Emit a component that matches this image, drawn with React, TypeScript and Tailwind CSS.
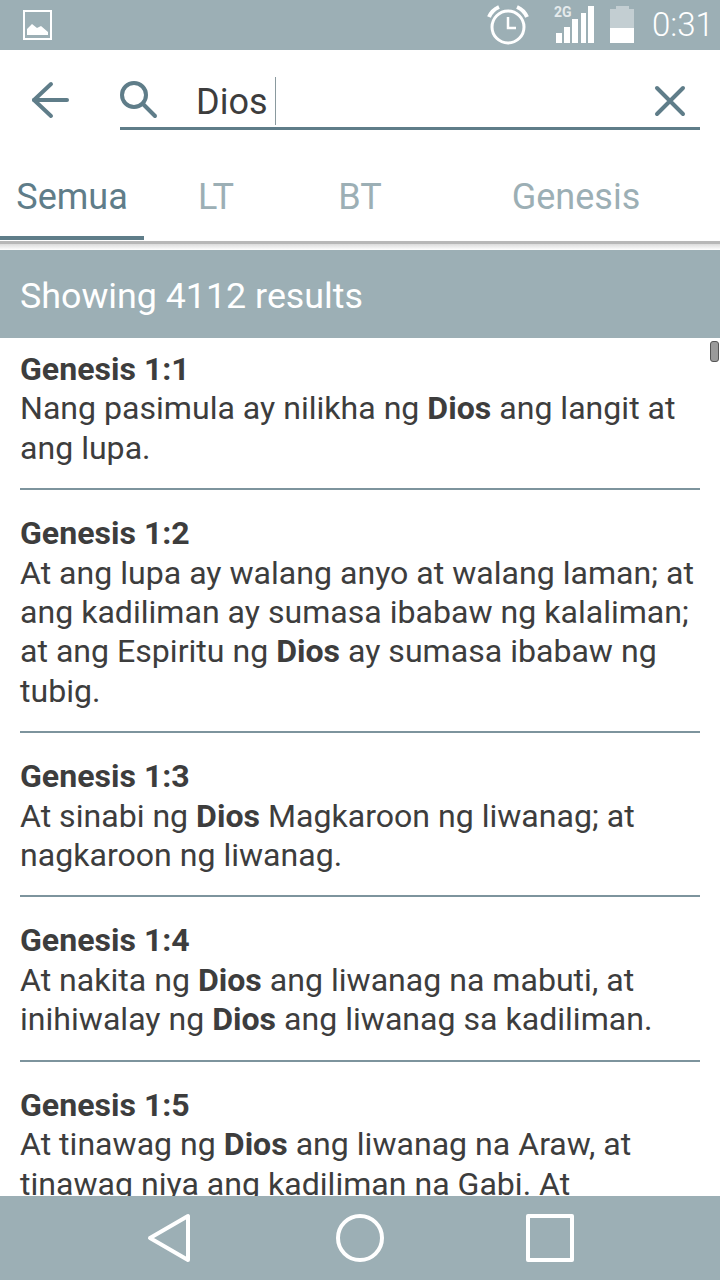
type Verse = { ref: string; lines: (string | { b: string })[][] }

const verses: Verse[] = [
  {
    ref: 'Genesis 1:1',
    lines: [
      ['Nang pasimula ay nilikha ng ', { b: 'Dios' }, ' ang langit at'],
      ['ang lupa.'],
    ],
  },
  {
    ref: 'Genesis 1:2',
    lines: [
      ['At ang lupa ay walang anyo at walang laman; at'],
      ['ang kadiliman ay sumasa ibabaw ng kalaliman;'],
      ['at ang Espiritu ng ', { b: 'Dios' }, ' ay sumasa ibabaw ng'],
      ['tubig.'],
    ],
  },
  {
    ref: 'Genesis 1:3',
    lines: [
      ['At sinabi ng ', { b: 'Dios' }, ' Magkaroon ng liwanag; at'],
      ['nagkaroon ng liwanag.'],
    ],
  },
  {
    ref: 'Genesis 1:4',
    lines: [
      ['At nakita ng ', { b: 'Dios' }, ' ang liwanag na mabuti, at'],
      ['inihiwalay ng ', { b: 'Dios' }, ' ang liwanag sa kadiliman.'],
    ],
  },
  {
    ref: 'Genesis 1:5',
    lines: [
      ['At tinawag ng ', { b: 'Dios' }, ' ang liwanag na Araw, at'],
      ['tinawag niya ang kadiliman na Gabi. At'],
    ],
  },
]

function StatusBar() {
  return (
    <div className="relative h-[50px] shrink-0 bg-[#9cafb5]">
      {/* picture notification */}
      <svg className="absolute left-[23px] top-[10px]" width="29" height="30" viewBox="0 0 29 30">
        <rect x="1" y="1" width="27" height="28" fill="none" stroke="#fff" strokeWidth="2" />
        <path d="M4 25 V19 L9 14 L14 18 L18 16 L25 22 V25 Z" fill="#fff" />
      </svg>
      {/* alarm */}
      <svg className="absolute left-[486px] top-[5px]" width="44" height="40" viewBox="0 0 44 40" fill="none" stroke="#fff">
        <circle cx="22" cy="22" r="16" strokeWidth="3" />
        <path d="M22 12 V23 H30" strokeWidth="2.5" />
        <path d="M3 12 Q6 5 13 2" strokeWidth="4" />
        <path d="M41 12 Q38 5 31 2" strokeWidth="4" />
      </svg>
      {/* signal */}
      <svg className="absolute left-[556px] top-[6px]" width="38" height="37" viewBox="0 0 38 37" fill="#fff">
        <rect x="0" y="27" width="6" height="10" />
        <rect x="8" y="21" width="6" height="16" />
        <rect x="16" y="13" width="6" height="24" />
        <rect x="25" y="7" width="5" height="30" />
        <rect x="32" y="0" width="6" height="37" />
      </svg>
      <span className="absolute left-[554px] top-[4px] text-[14px] leading-[16px] font-bold text-[#e4eaec]">2G</span>
      {/* battery */}
      <div className="absolute left-[610px] top-[6px] flex h-[37px] w-[24px] flex-col items-center">
        <div className="h-[3px] w-[13px] bg-[#c3ced2]" />
        <div className="h-[19px] w-full bg-[#c3ced2]" />
        <div className="h-[15px] w-full bg-white" />
      </div>
      <span className="absolute left-[652px] top-[7px] text-[33px] leading-[36px] font-light text-white">0:31</span>
    </div>
  )
}

function SearchHeader() {
  return (
    <div className="flex h-[100px] shrink-0 items-start bg-white">
      <div className="flex h-[100px] w-[120px] shrink-0 items-center pl-[30px]">
        <svg width="40" height="38" viewBox="0 0 40 38" fill="none" stroke="#5f7d89" strokeWidth="4" strokeLinecap="round" strokeLinejoin="round">
          <path d="M37 19 H4" />
          <path d="M21 3 L4 19 L21 35" />
        </svg>
      </div>
      <div className="mr-[20px] mt-[24px] flex h-[56px] flex-1 items-center border-b-[3px] border-[#5f7d89]">
        <svg className="mb-[2px]" width="38" height="38" viewBox="0 0 38 38" fill="none" stroke="#5f7d89" strokeWidth="4">
          <circle cx="14" cy="14" r="12" />
          <path d="M23 23 L35 35" strokeLinecap="round" />
        </svg>
        <span className="ml-[38px] pt-[2px] text-[36px] leading-[40px] text-[#3d3d3d]">Dios</span>
        <span className="ml-[7px] h-[48px] w-px bg-[#8a9a9f]" />
        <svg className="ml-auto mr-[13px]" width="34" height="34" viewBox="0 0 34 34" fill="none" stroke="#5f7d89" strokeWidth="4" strokeLinecap="round">
          <path d="M4 4 L30 30 M30 4 L4 30" />
        </svg>
      </div>
    </div>
  )
}

function Tabs() {
  return (
    <div className="flex h-[94px] shrink-0 flex-col border-b-[3px] border-[#b8b8b8] bg-white pb-px">
      <div className="flex h-[90px] text-[36px] text-[#9cafb5]">
        <div className="flex w-[144px] items-center justify-center border-b-[4px] border-[#5f7d89] pt-[8px] text-[#5f7d89]">Semua</div>
        <div className="flex w-[144px] items-center justify-center pt-[8px] pb-[4px]">LT</div>
        <div className="flex w-[144px] items-center justify-center pt-[8px] pb-[4px]">BT</div>
        <div className="flex w-[288px] items-center justify-center pt-[8px] pb-[4px]">Genesis</div>
      </div>
    </div>
  )
}

function VerseRow({ verse, first, last }: { verse: Verse; first: boolean; last: boolean }) {
  return (
    <div className={`mx-[20px] ${first ? 'pb-[20px] pt-[12px]' : 'pb-[20px] pt-[24px]'} ${last ? '' : 'border-b-2 border-[#7d949d]'}`}>
      <div className="text-[32.1px] leading-[39.4px] font-bold text-[#3d3d3d]">{verse.ref}</div>
      {verse.lines.map((line, i) => (
        <div key={i} className="whitespace-nowrap text-[32.1px] leading-[39.4px] text-[#3d3d3d]">
          {line.map((part, j) => (typeof part === 'string' ? <span key={j}>{part}</span> : <b key={j} className="font-bold">{part.b}</b>))}
        </div>
      ))}
    </div>
  )
}

function NavBar() {
  return (
    <div className="flex h-[84px] shrink-0 items-center bg-[#9cafb5]">
      <svg className="ml-[146px]" width="46" height="50" viewBox="0 0 46 50" fill="none" stroke="#fff" strokeWidth="4" strokeLinejoin="round">
        <path d="M42 3 V47 L4 25 Z" />
      </svg>
      <svg className="ml-[143px]" width="50" height="50" viewBox="0 0 50 50" fill="none" stroke="#fff" strokeWidth="4">
        <circle cx="25" cy="25" r="22" />
      </svg>
      <svg className="ml-[140px]" width="50" height="50" viewBox="0 0 50 50" fill="none" stroke="#fff" strokeWidth="4" strokeLinejoin="round">
        <rect x="3" y="3" width="44" height="44" />
      </svg>
    </div>
  )
}

export default function App() {
  return (
    <div className="flex h-[1280px] w-[720px] flex-col overflow-hidden bg-white font-['Roboto',sans-serif]">
      <StatusBar />
      <SearchHeader />
      <Tabs />
      <div className="h-[6px] shrink-0 bg-gradient-to-b from-[#dcdcdc] to-white" />
      <div className="flex h-[88px] shrink-0 items-center bg-[#9cafb5] pl-[20px] pt-[6px] text-[35.8px] text-white">Showing 4112 results</div>
      <div className="relative min-h-0 flex-1 overflow-hidden">
        <div className="absolute right-[1px] top-[3px] h-[21px] w-[9px] rounded-[3px] border border-[#555] bg-[#9a9a9a]" />
        {verses.map((v, i) => (
          <VerseRow key={v.ref} verse={v} first={i === 0} last={i === verses.length - 1} />
        ))}
      </div>
      <NavBar />
    </div>
  )
}
